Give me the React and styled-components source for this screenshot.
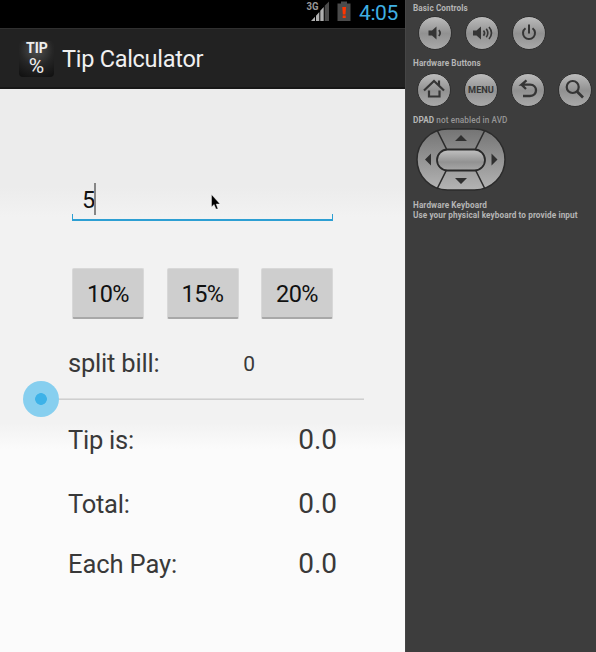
import React from "react";
import styled, { createGlobalStyle } from "styled-components";

const GlobalStyle = createGlobalStyle`
  * { box-sizing: border-box; }
  body { margin: 0; background: #3d3d3d; font-family: Roboto, "Liberation Sans", sans-serif; }
`;

const Emulator = styled.main`
  display: flex;
  width: 596px;
  height: 652px;
  overflow: hidden;
`;

const Screen = styled.section`
  position: relative;
  flex: none;
  width: 405px;
  display: flex;
  flex-direction: column;
`;

const StatusBar = styled.header`
  height: 28px;
  display: flex;
  align-items: flex-start;
  justify-content: flex-end;
  padding-right: 8px;
  background: #000;
`;

const SignalIcon = styled.svg`
  width: 24px;
  height: 28px;
  margin-right: 7px;
`;

const BatteryIcon = styled.svg`
  width: 14px;
  height: 28px;
  margin-right: 8px;
`;

const Clock = styled.time`
  font-size: 21px;
  line-height: 26px;
  width: 38px;
  white-space: nowrap;
  color: #3fafe2;
  letter-spacing: ${(p) => p.$spacing}px;
`;

const ActionBar = styled.div`
  height: 61px;
  display: flex;
  align-items: center;
  padding: 1px 0 0 19px;
  gap: 8px;
  background: #222;
  border-top: 1px solid #303030;
  border-bottom: 2px solid #171717;
`;

const AppIcon = styled.div`
  width: 35px;
  height: 36px;
  border-radius: 4px;
  display: flex;
  flex-direction: column;
  align-items: center;
  color: #eee;
  background: radial-gradient(circle at 50% 25%, #505050 0, #262626 50%, #111 95%);
`;

const IconWord = styled.span`
  font-size: 14px;
  line-height: 14px;
  height: 15px;
  font-weight: 700;
  letter-spacing: 0;
  margin-left: 1px;
`;

const IconPercent = styled.span`
  font-size: 21px;
  line-height: 20px;
`;

const AppTitle = styled.h1`
  margin: 0;
  color: #f0f0f0;
  font-size: 23.5px;
  font-weight: 400;
  line-height: 30px;
  letter-spacing: ${(p) => p.$spacing}px;
`;

const Content = styled.div`
  flex: 1;
  display: flex;
  flex-direction: column;
  padding-top: 91px;
  background: linear-gradient(#ececec 0, #ececec 98px, #f2f2f2 128px, #f2f2f2 334px, #fbfbfb 360px, #fbfbfb);
`;

const AmountField = styled.div`
  width: 261px;
  height: 41px;
  margin-left: 72px;
  padding: 3px 0 0 10px;
  display: flex;
  align-items: flex-start;
  border: 0 solid #2d9fd3;
  border-bottom-width: 2px;
  background:
    linear-gradient(#2d9fd3, #2d9fd3) left bottom / 1px 5px no-repeat,
    linear-gradient(#2d9fd3, #2d9fd3) right bottom / 1px 5px no-repeat;
`;

const Amount = styled.span`
  font-size: 23.5px;
  line-height: 35px;
  width: 12px;
  color: #111;
`;

const Caret = styled.span`
  width: 2px;
  height: 32px;
  background: #868686;
`;

const PercentRow = styled.div`
  display: grid;
  grid-template-columns: repeat(3, 72px);
  justify-content: space-between;
  width: 261px;
  margin: 47px 0 0 72px;
`;

const PercentButton = styled.button`
  height: 51px;
  margin: 0;
  padding: 2px 0 0;
  border: 1px solid #d8d8d8;
  border-bottom: 2px solid #a8a8a8;
  border-radius: 2px;
  background: #cecece;
  color: #111;
  font: 400 23.5px/46px Roboto, sans-serif;
  letter-spacing: ${(p) => p.$spacing}px;
  white-space: nowrap;
`;

const ResultRow = styled.div`
  display: flex;
  align-items: center;
  justify-content: space-between;
  width: 269px;
  height: 34px;
  margin: ${(p) => p.$top}px 0 0 68px;
  color: #393939;
`;

const Label = styled.span`
  font-size: 25.5px;
  line-height: 34px;
  white-space: nowrap;
  letter-spacing: ${(p) => p.$spacing || 0}px;
`;

const Value = styled.span`
  font-size: ${(p) => (p.$small ? 21 : 28)}px;
  line-height: 34px;
  padding-top: ${(p) => (p.$small ? 1 : 0)}px;
  margin-right: ${(p) => (p.$small ? 82 : 0)}px;
`;

const Slider = styled.div`
  display: flex;
  align-items: center;
  height: 36px;
  width: 342px;
  margin: 1px 0 0 22.5px;
  background: linear-gradient(#dedede 50%, #cfcfcf 50%) 18px 17px / 323px 2px no-repeat;
`;

const Thumb = styled.div`
  width: 36px;
  height: 36px;
  border-radius: 50%;
  background: radial-gradient(circle, #3db2e8 0, #3db2e8 5.5px, #87cfef 6.2px, #87cfef 100%);
`;

const Pointer = styled.svg`
  position: absolute;
  left: 210.5px;
  top: 194px;
  width: 10px;
  height: 17px;
`;

const Controls = styled.aside`
  flex: 1;
  min-width: 0;
  padding: 2px 0 0 8px;
  background: #3d3d3d;
  border-left: 1px solid #454545;
`;

const Caption = styled.p`
  margin: ${(p) => p.$top || 0}px 0 0 -1px;
  height: 11px;
  font-size: 8.2px;
  font-weight: 700;
  line-height: 13px;
  white-space: nowrap;
  color: #b5b5b5;
  letter-spacing: 0.1px;
`;

const Muted = styled.span`
  color: #969696;
  font-weight: 500;
`;

const KeyRow = styled.div`
  display: flex;
  gap: 13px;
  margin: ${(p) => p.$top}px 0 0 ${(p) => p.$left}px;
`;

const Key = styled.button`
  flex: none;
  width: 34px;
  height: 34px;
  padding: 0;
  border: 1.5px solid #303030;
  border-radius: 50%;
  background: linear-gradient(#bcbcbc, #919191 52%, #a9a9a9);
  display: flex;
  align-items: center;
  justify-content: center;
  color: #353535;
`;

const KeyText = styled.span`
  font: 700 9.2px/12px Roboto, sans-serif;
  letter-spacing: 0;
`;

const Glyph = styled.svg`
  flex: none;
  width: 30px;
  height: 30px;
  fill: none;
  stroke: currentColor;
  stroke-width: 2;
`;

const Dpad = styled.svg`
  display: block;
  width: 92px;
  height: 65px;
  margin: 2px 0 0 0.5px;
`;

function App() {
  return (
    <>
      <GlobalStyle />
      <Emulator>
        <Screen>
          <StatusBar>
            <SignalIcon viewBox="0 0 24 28">
              <text x="0.5" y="10" fill="#999" fontFamily="Roboto" fontSize="10" fontWeight="700" textLength="12" lengthAdjust="spacingAndGlyphs">3G</text>
              <path d="M5 21 9 16.7V21ZM10 15.7 13.3 12V21H10ZM14.3 10.8 17.7 7V21H14.3Z" fill="#b0b0b0" />
              <path d="M18.7 5.8 23 1.5V21H18.7Z" fill="#4b4b4b" />
            </SignalIcon>
            <BatteryIcon viewBox="0 0 14 28">
              <path d="M4 1.5H10V3.5H13.5V21H.5V3.5H4Z" fill="#4b4b4b" />
              <path d="M5.3 7H9L8.5 14.5H5.8ZM5.7 15.5H8.7V18H5.7Z" fill="#ff3500" />
            </BatteryIcon>
            <Clock $spacing={-0.4}>4:05</Clock>
          </StatusBar>
          <ActionBar>
            <AppIcon>
              <IconWord>TIP</IconWord>
              <IconPercent>%</IconPercent>
            </AppIcon>
            <AppTitle $spacing={-0.28}>Tip Calculator</AppTitle>
          </ActionBar>
          <Content>
            <AmountField>
              <Amount>5</Amount>
              <Caret />
            </AmountField>
            <PercentRow>
              {["10%", "15%", "20%"].map((rate) => (
                <PercentButton key={rate} $spacing={-0.6}>{rate}</PercentButton>
              ))}
            </PercentRow>
            <ResultRow $top={27}>
              <Label $spacing={-0.2}>split bill:</Label>
              <Value $small>0</Value>
            </ResultRow>
            <Slider><Thumb /></Slider>
            <ResultRow $top={6}>
              <Label $spacing={-0.25}>Tip is:</Label>
              <Value>0.0</Value>
            </ResultRow>
            <ResultRow $top={30}>
              <Label $spacing={-0.25}>Total:</Label>
              <Value>0.0</Value>
            </ResultRow>
            <ResultRow $top={26}>
              <Label $spacing={-0.1}>Each Pay:</Label>
              <Value>0.0</Value>
            </ResultRow>
          </Content>
          <Pointer viewBox="0 0 10 17">
            <path d="M.5.5V13L3 10.5 5 15H7L5.2 10H9Z" fill="#000" stroke="#fff" strokeWidth=".4" />
          </Pointer>
        </Screen>
        <Controls>
          <Caption>Basic Controls</Caption>
          <KeyRow $top={3} $left={4}>
            <Key aria-label="Volume down">
              <Glyph viewBox="0 0 30 30">
                <path d="M8.5 12.5H12L16.5 8.5V21.5L12 17.5H8.5Z" fill="currentColor" stroke="none" />
                <path d="M18.8 12.2Q21.5 15 18.8 18" strokeWidth="1.7" />
              </Glyph>
            </Key>
            <Key aria-label="Volume up">
              <Glyph viewBox="0 0 30 30">
                <path d="M6 12.5H9.5L14 8.5V21.5L9.5 17.5H6Z" fill="currentColor" stroke="none" />
                <path d="M16.5 12.5Q18.7 15 16.5 17.8M19.3 10.7Q22.3 15 19.3 19.3M22 9Q27 15 22 21" strokeWidth="1.6" />
              </Glyph>
            </Key>
            <Key aria-label="Power">
              <Glyph viewBox="0 0 30 30">
                <path d="M11.5 10.2A6 6 0 1 0 18.5 10.2M15 6.5V15.5" />
              </Glyph>
            </Key>
          </KeyRow>
          <Caption $top={7}>Hardware Buttons</Caption>
          <KeyRow $top={5} $left={3}>
            <Key aria-label="Home">
              <Glyph viewBox="0 0 30 30">
                <path d="M5 15.5 15 6 25 15.5M20 10.5V5.5M10 15.5V21.5H20.5V15.5" strokeWidth="2.2" />
              </Glyph>
            </Key>
            <Key><KeyText>MENU</KeyText></Key>
            <Key aria-label="Back">
              <Glyph viewBox="0 0 30 30">
                <path d="M13.5 5.3 8.5 9.7H17C25 9.7 25 21 17 21H10M8.5 9.7 13 14" strokeWidth="2.3" />
              </Glyph>
            </Key>
            <Key aria-label="Search">
              <Glyph viewBox="0 0 30 30">
                <circle cx="12.7" cy="12" r="6" strokeWidth="2.2" />
                <path d="M17 16.5 23 22.5" strokeWidth="2.7" />
              </Glyph>
            </Key>
          </KeyRow>
          <Caption $top={7}>DPAD <Muted>not enabled in AVD</Muted></Caption>
          <Dpad viewBox="0 0 92 65">
            <defs>
              <linearGradient id="pad" x2="0" y2="1">
                <stop stopColor="#747474" />
                <stop offset="1" stopColor="#b4b4b4" />
              </linearGradient>
              <linearGradient id="center" x2="0" y2="1">
                <stop stopColor="#c2c2c2" />
                <stop offset=".6" stopColor="#929292" />
                <stop offset="1" stopColor="#a8a8a8" />
              </linearGradient>
            </defs>
            <rect x="2" y="2" width="88" height="61" rx="30.5" fill="url(#pad)" stroke="#2b2b2b" strokeWidth="1.5" />
            <path d="M22 3 31.5 22M70 3 60.5 22M22 62 31.5 43M70 62 60.5 43" stroke="#2c2c2c" strokeWidth="1.6" />
            <rect x="22" y="22.5" width="48" height="21" rx="10.5" fill="url(#center)" stroke="#292929" strokeWidth="1.8" />
            <path d="M40 14 46 8 52 14ZM40 51H52L46 57ZM16 26.5V38.5L10 32.5ZM76.5 26.5V38.5L82.5 32.5Z" fill="#303030" />
          </Dpad>
          <Caption $top={7}>Hardware Keyboard</Caption>
          <Caption $top={-1}>Use your physical keyboard to provide input</Caption>
        </Controls>
      </Emulator>
    </>
  );
}

export default App;
